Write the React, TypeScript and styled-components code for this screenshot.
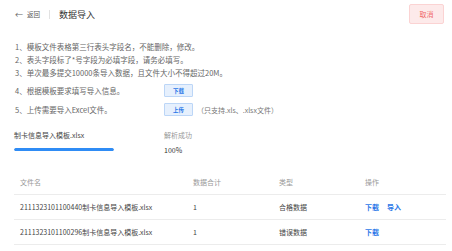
import * as React from "react";
import styled, { createGlobalStyle } from "styled-components";

const GlobalStyle = createGlobalStyle`
  html, body {
    margin: 0;
    padding: 0;
    background: #fff;
  }
  body {
    font-family: "Noto Sans CJK SC", "Liberation Sans", sans-serif;
    color: #333;
  }
`;

const MainWrapper = styled.div`
  width: 452px;
  height: 251px;
  box-sizing: border-box;
  padding: 0 6px 0 14px;
  display: flex;
  flex-direction: column;
  background: #fff;
  overflow: hidden;
`;

const HeaderWrapper = styled.div`
  height: 28px;
  display: flex;
  align-items: center;
  justify-content: space-between;
`;
const HeaderLeft = styled.div`
  display: flex;
  align-items: center;
`;
const BackLink = styled.div`
  display: flex;
  align-items: center;
  margin-left: 1px;
  font-size: 6.5px;
  color: #555;
  gap: 4px;
`;
const BackArrow = styled.span`
  font-size: 8px;
  color: #666;
`;
const HeaderDivider = styled.div`
  width: 1px;
  height: 9px;
  background: #e2e2e2;
  margin: 0 9px 0 9px;
`;
const HeaderTitle = styled.div`
  font-size: 9px;
  color: #333;
`;
const CancelButton = styled.div`
  width: 35px;
  height: 20px;
  box-sizing: border-box;
  margin-right: 2px;
  display: flex;
  align-items: center;
  justify-content: center;
  background: #fdeaea;
  border: 1px solid #fbd3d3;
  border-radius: 2px;
  color: #f06a6a;
  font-size: 7px;
`;

const TipList = styled.div`
  margin-top: 11.5px;
  display: flex;
  flex-direction: column;
  font-size: 7.5px;
  color: #666;
`;
const TipLine = styled.div`
  height: 13px;
  line-height: 13px;
  white-space: nowrap;
  padding-left: 1px;
`;
const ActionLine = styled.div<{ $top: number }>`
  margin-top: ${(p) => p.$top}px;
  height: 13px;
  display: flex;
  align-items: center;
  white-space: nowrap;
`;
const ActionLabel = styled.div`
  width: 150px;
  padding-left: 1px;
  box-sizing: border-box;
`;
const SmallButton = styled.div`
  width: 29px;
  height: 13px;
  box-sizing: border-box;
  display: flex;
  align-items: center;
  justify-content: center;
  background: #e6f0fd;
  border: 1px solid #bcd6f7;
  border-radius: 1px;
  color: #2b78e8;
  font-size: 5.5px;
  font-weight: bold;
`;
const ActionHint = styled.div`
  margin-left: 4px;
  color: #777;
  font-size: 7px;
`;

const ParseGrid = styled.div`
  margin-top: 12px;
  display: grid;
  grid-template-columns: 150px 1fr;
  grid-auto-rows: 13px;
  row-gap: 2px;
  align-items: center;
  font-size: 7px;
`;
const ParseFile = styled.div`
  color: #444;
`;
const ParseStatus = styled.div`
  color: #999;
`;
const ProgressTrack = styled.div`
  width: 100px;
  height: 2.5px;
  border-radius: 2px;
  background: #e8e8e8;
  overflow: hidden;
`;
const ProgressBar = styled.div`
  height: 100%;
  background: #2f8cf5;
  border-radius: 2px;
`;
const ParsePercent = styled.div`
  color: #333;
`;

const Table = styled.div`
  margin-top: 14px;
  display: flex;
  flex-direction: column;
  font-size: 7px;
`;
const TableRow = styled.div<{ $head?: boolean }>`
  display: grid;
  grid-template-columns: 173px 86px 86px 1fr;
  height: ${(p) => (p.$head ? 24 : 24)}px;
  align-items: center;
  border-bottom: 1px solid #ececec;
  color: ${(p) => (p.$head ? "#999" : "#444")};
`;
const Cell = styled.div`
  padding-left: 6px;
  white-space: nowrap;
  display: flex;
  gap: 8px;
`;
const OpLink = styled.span`
  color: #2b78e8;
  font-weight: bold;
`;

const rows = [
  { name: "2111323101100440制卡信息导入模板.xlsx", count: 1, type: "合格数据", ops: ["下载", "导入"] },
  { name: "2111323101100296制卡信息导入模板.xlsx", count: 1, type: "错误数据", ops: ["下载"] },
];

const App: React.FC = () => {
  const percent = 100;
  return (
    <>
      <GlobalStyle />
      <MainWrapper>
        <HeaderWrapper>
          <HeaderLeft>
            <BackLink>
              <BackArrow>←</BackArrow>
              <span>返回</span>
            </BackLink>
            <HeaderDivider />
            <HeaderTitle>数据导入</HeaderTitle>
          </HeaderLeft>
          <CancelButton>取消</CancelButton>
        </HeaderWrapper>

        <TipList>
          <TipLine>1、模板文件表格第三行表头字段名，不能删除，修改。</TipLine>
          <TipLine>2、表头字段标了*号字段为必填字段，请务必填写。</TipLine>
          <TipLine>3、单次最多提交10000条导入数据，且文件大小不得超过20M。</TipLine>
          <ActionLine $top={5.5}>
            <ActionLabel>4、根据模板要求填写导入信息。</ActionLabel>
            <SmallButton>下载</SmallButton>
          </ActionLine>
          <ActionLine $top={6}>
            <ActionLabel>5、上传需要导入Excel文件。</ActionLabel>
            <SmallButton>上传</SmallButton>
            <ActionHint>（只支持.xls、.xlsx文件）</ActionHint>
          </ActionLine>
        </TipList>

        <ParseGrid>
          <ParseFile>制卡信息导入模板.xlsx</ParseFile>
          <ParseStatus>解析成功</ParseStatus>
          <ProgressTrack>
            <ProgressBar style={{ width: `${percent}%` }} />
          </ProgressTrack>
          <ParsePercent>{percent}%</ParsePercent>
        </ParseGrid>

        <Table>
          <TableRow $head>
            <Cell>文件名</Cell>
            <Cell>数据合计</Cell>
            <Cell>类型</Cell>
            <Cell>操作</Cell>
          </TableRow>
          {rows.map((r) => (
            <TableRow key={r.name}>
              <Cell>{r.name}</Cell>
              <Cell>{r.count}</Cell>
              <Cell>{r.type}</Cell>
              <Cell>
                {r.ops.map((o) => (
                  <OpLink key={o}>{o}</OpLink>
                ))}
              </Cell>
            </TableRow>
          ))}
        </Table>
      </MainWrapper>
    </>
  );
};

export default App;
